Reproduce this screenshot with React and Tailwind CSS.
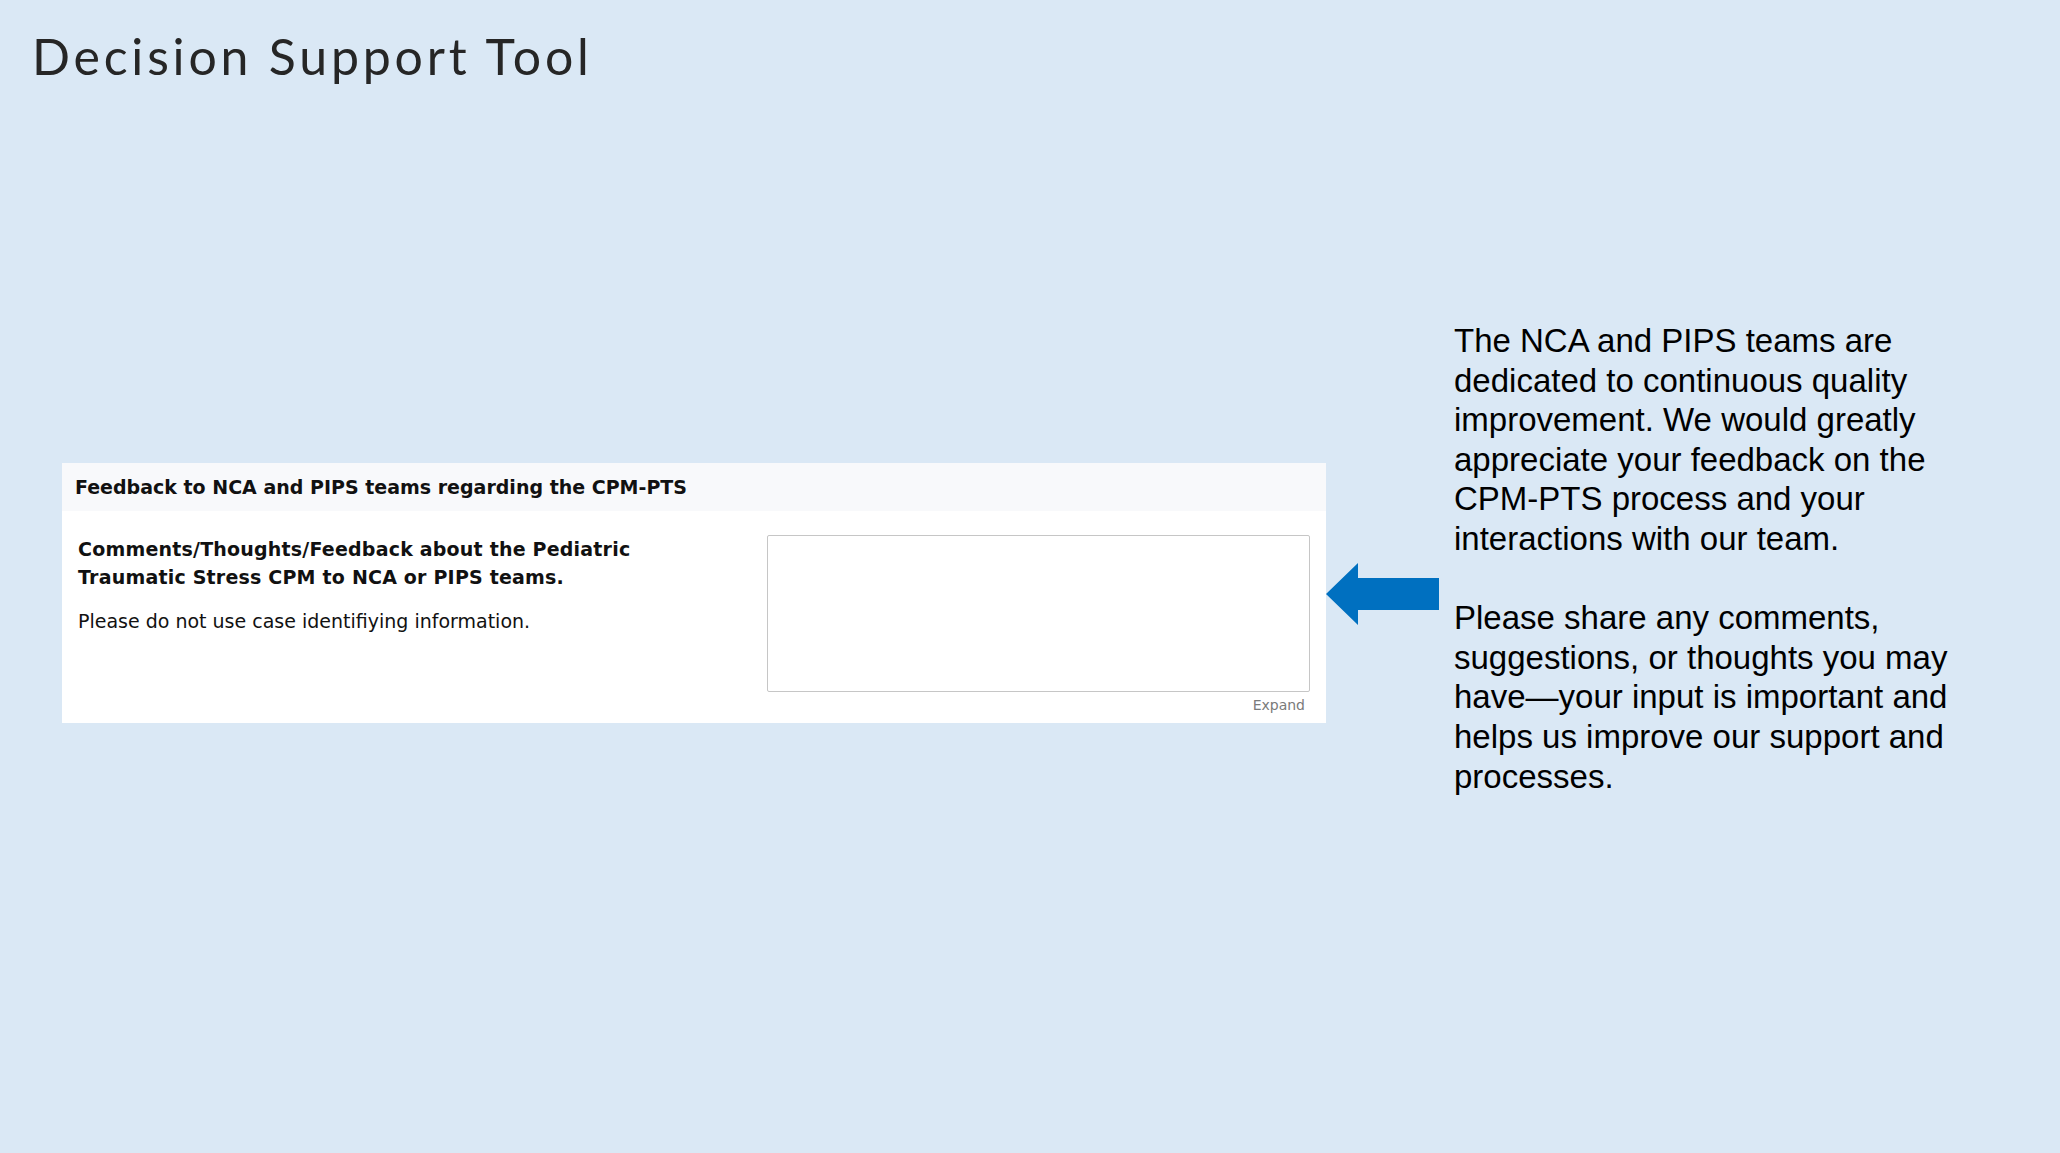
import React from 'react';

const LeftArrow = () => (
  <svg width="113" height="62" viewBox="0 0 113 62" className="shrink-0 mt-[242px]">
    <polygon points="0,31 32,0 32,15 113,15 113,47 32,47 32,62" fill="#0070c0" />
  </svg>
);

const FeedbackPanel = () => {
  return (
    <div className="w-[1264px] h-[260px] shrink-0 mt-[142px] bg-white flex flex-col">
      <div className="h-[48px] bg-[#f8f9fb] flex items-center pl-[13px]">
        <h3 className="font-['DejaVu_Sans',sans-serif] font-bold text-[19px] text-[#111]">
          Feedback to NCA and PIPS teams regarding the CPM-PTS
        </h3>
      </div>
      <div className="flex gap-[17px] pt-[24px] px-4 font-['DejaVu_Sans',sans-serif] text-[#111]">
        <div className="w-[672px]">
          <p className="font-bold text-[19px] leading-[28px] tracking-[0.2px] w-[620px]">
            Comments/Thoughts/Feedback about the Pediatric Traumatic Stress CPM to NCA or PIPS teams.
          </p>
          <p className="text-[19px] leading-[26px] mt-[17px]">Please do not use case identifiying information.</p>
        </div>
        <div className="w-[543px] flex flex-col">
          <textarea className="w-full h-[157px] border border-[#c6c6c6] rounded-[2px] resize-none outline-none bg-white" />
          <div className="flex justify-end pr-[5px] mt-[4px]">
            <span className="text-[14px] leading-[18px] text-[#7a7a7a]">Expand</span>
          </div>
        </div>
      </div>
    </div>
  );
};

export default function App() {
  return (
    <div className="w-full h-[1153px] bg-[#dae8f5] overflow-hidden">
      <h1 className="pl-[32px] pt-[31px] font-['Lato',sans-serif] text-[50px] leading-none tracking-[3.8px] text-[#262626]">
        Decision Support Tool
      </h1>
      <div className="flex items-start pl-[62px] mt-[240px]">
        <FeedbackPanel />
        <LeftArrow />
        <div className="ml-[15px] w-[520px] font-['Liberation_Sans',Arial,sans-serif] text-[33px] leading-[39.6px] text-black">
          <p>
            The NCA and PIPS teams are dedicated to continuous quality improvement. We would greatly appreciate your
            feedback on the CPM-PTS process and your interactions with our team.
          </p>
          <p className="mt-[39.6px]">
            Please share any comments, suggestions, or thoughts you may have—your input is important and helps us
            improve our support and processes.
          </p>
        </div>
      </div>
    </div>
  );
}
